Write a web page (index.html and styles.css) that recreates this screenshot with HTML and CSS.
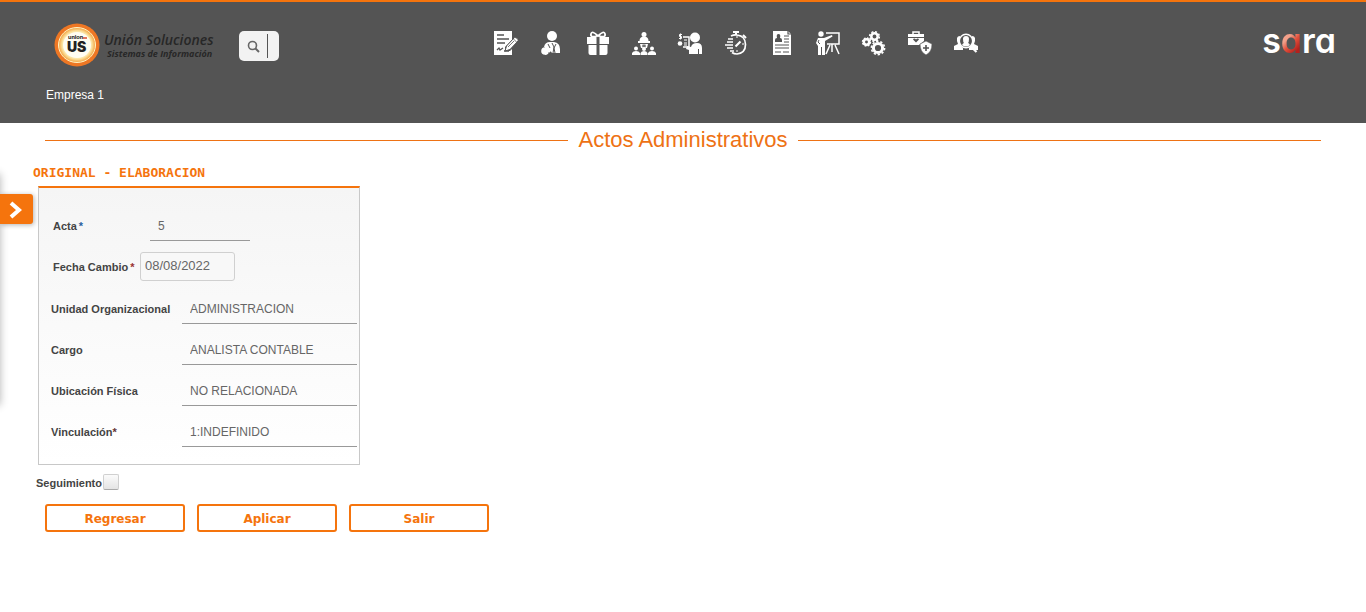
FILE: index.html
```html
<!DOCTYPE html>
<html lang="es">
<head>
<meta charset="utf-8">
<meta name="viewport" content="width=device-width, initial-scale=1">
<title>Actos Administrativos</title>
<link rel="stylesheet" href="styles.css">
</head>
<body>
<header class="header">
  <div class="topbar">
    <div class="brand">
      <a class="brand-link" href="#">
        <svg class="brand-mark" viewBox="0 0 46 44" aria-hidden="true">
          <defs>
            <radialGradient id="glow"><stop offset=".5" stop-color="#fffef0"/><stop offset=".8" stop-color="#fbe3a0"/><stop offset="1" stop-color="#f2a03d"/></radialGradient>
          </defs>
          <ellipse cx="23" cy="22" rx="22.500" ry="21.500" fill="#ee7724"/>
          <ellipse cx="23" cy="22" rx="18.500" ry="17.500" fill="url(#glow)" stroke="#fff3c4" stroke-width="1"/>
          <ellipse cx="23" cy="22" rx="14" ry="13" fill="#fffdf2"/>
          <text x="14" y="16" class="mark-small">union</text>
          <path d="M29 15h4" stroke="#d9482b" stroke-width="1.500"/>
          <text x="13" y="29" class="mark-big">US</text>
        </svg>
        <span class="brand-text">
          <span class="brand-name">Unión Soluciones</span>
          <span class="brand-sub">Sistemas de Información</span>
        </span>
      </a>
      <button class="search" type="button" aria-label="Buscar">
        <svg viewBox="0 0 14 14" width="14" height="14" fill="none" stroke="#666"><circle cx="5.500" cy="5.500" r="4" stroke-width="1.600"/><path d="M8.500 8.500l3.500 3.500" stroke-width="2"/></svg>
        <span class="search-line"></span>
      </button>
    </div>
    <nav class="modules" aria-label="Módulos">
      <a href="#" aria-label="Contratos"><svg viewBox="0 0 24 24">
        <path fill="#fff" d="M0 0h18v9l-7 7v4h5l2-2v6H0z"/><path d="M3 4h7M3 8h12M3 12h8M3 19l2-2 1 2 3-2M10 20h5" stroke="#545454" stroke-width="1.300" fill="none"/>
        <path d="M11 20l1.500-5 7.500-8c1-1.500 5 1 4 3l-8 8.500z" fill="#fff" stroke="#545454"/><path d="M14 16l6-6M19.500 8l3 3" stroke="#545454" stroke-width=".8"/></svg></a>
      <a href="#" aria-label="Empleados"><svg viewBox="0 0 24 24" fill="#fff">
        <circle cx="12" cy="5" r="5"/><path d="M4 16q1-5 6-5h4q6 1 6 7v4h-8l-3-4-3-2z"/><circle cx="5" cy="20" r="3.800"/><path d="M5 16l5-2 1 6-3 3-3 1z"/><path d="M8 13l2 4M12 12l2 4-1 6M16 13l-2 4 1 5M8 22l6 1" stroke="#545454" fill="none"/></svg></a>
      <a href="#" aria-label="Beneficios"><svg viewBox="0 0 24 24">
        <path fill="#fff" d="M1 6h9.500v7H1zM13.500 6H23v7h-9.500zM2.500 14h8v10h-6q-2 0-2-2zM13.500 14h8v8q0 2-2 2h-6z"/><path d="M11 5Q4 7 5 3t7 2q6-6 7-2t-6 2" fill="none" stroke="#fff" stroke-width="1.800"/></svg></a>
      <a href="#" aria-label="Comités"><svg viewBox="0 0 24 24" fill="#fff">
        <circle cx="12" cy="3.500" r="2.500"/><path d="M7.500 10q0-4.500 4.500-4.500t4.500 4.500zM6 10h12v2H6zM8 13h8l-1 4H9z"/><path d="M12 13v4M10 14l4 2M14 14l-4 2" stroke="#545454" stroke-width=".8"/><circle cx="4" cy="17.500" r="2"/><circle cx="20" cy="17.500" r="2"/><circle cx="12" cy="18" r="2"/><path d="M0 24v-2q1-2 4-2t4 2v2zM8.500 24v-2q1-2 3.500-2t3.500 2v2zM16 24v-2q1-2 4-2t4 2v2z"/></svg></a>
      <a href="#" aria-label="Nómina"><svg viewBox="0 0 24 24">
        <circle cx="17" cy="6.500" r="5" fill="#fff"/><path fill="#fff" d="M11 23v-4l-3-1 1-3 4 1q1-4 6-4 5 0 5 5v6h-3v-5h-1v5z"/><path d="M5 6h6v10H5" fill="none" stroke="#fff" stroke-width="1.500"/><path d="M6 9h3M6 12h3M6 14h3" stroke="#fff"/><path d="M4 3.500H1.500v2h2v2H1M2.500 2.500v6" fill="none" stroke="#fff"/><circle cx="2" cy="12.500" r="2.300" fill="#fff"/></svg></a>
      <a href="#" aria-label="Tiempos"><svg viewBox="0 0 24 24" fill="none" stroke="#fff">
        <path d="M7 5q3-1.500 6-1 8.500 1 8.500 9.500T13 23q-3 0-5-1.500" stroke-width="1.700"/><path d="M9 1h6M12 1v3M19 4l3 3" stroke-width="2"/><path d="M4 8h5M3 11h6M1 14h8M3 17h6M6 20h4" stroke-width="1.500"/><path d="M11.500 15.500l5-5" stroke-width="2.200"/><path d="M13 5v2M20 13h-2M13 21v-2" /></svg></a>
      <a href="#" aria-label="Hojas de vida"><svg viewBox="0 0 24 24">
        <path fill="#fff" d="M3 0h15l3 3v21H3z"/><path fill="#545454" d="M5 11V9q0-2 2-2-1-4 1.500-4T10 7q2 0 2 2v2z"/><path d="M14 5h5M14 8h5M14 11h5M5 14h14M5 17h14M5 21h6M13 21h6M18 0v3h3" fill="none" stroke="#545454" stroke-width="1.200"/></svg></a>
      <a href="#" aria-label="Capacitación"><svg viewBox="0 0 24 24">
        <circle cx="5" cy="3" r="2.700" fill="#fff"/><path fill="#fff" d="M2 7h6l8-3 .5 1.500L9 10v14H6v-8H5v8H2v-9l-2-3z"/><path d="M10 2h13v11H11M14 14l-4 9M19 14l4 9M16 13v8" fill="none" stroke="#fff" stroke-width="1.500"/><path d="M3 9l-1 2 2 2" stroke="#545454" fill="none"/></svg></a>
      <a href="#" aria-label="Configuración"><svg viewBox="0 0 24 24" fill="none" stroke="#fff">
        <g stroke-width="2.500"><circle cx="12.500" cy="5.500" r="3.200"/><circle cx="4.500" cy="11" r="2.700"/><circle cx="16" cy="17" r="4.600" stroke-width="3"/></g><g stroke-width="1.600"><circle cx="12.500" cy="5.500" r="4.800" stroke-dasharray="2 1.770"/><circle cx="4.500" cy="11" r="3.900" stroke-dasharray="1.700 1.360"/><circle cx="16" cy="17" r="6.600" stroke-dasharray="2.300 1.850"/></g></svg></a>
      <a href="#" aria-label="Salud ocupacional"><svg viewBox="0 0 24 24">
        <path fill="#fff" d="M0 3h16v3H0zM0 7h16v3l-5 4H0z"/><path d="M5 3V1h6v2" fill="none" stroke="#fff" stroke-width="1.500"/><path d="M8 11.500L5 8.500q1-2 3 0 2-2 3 0z" fill="#545454"/><path fill="#fff" stroke="#545454" stroke-width=".6" d="M12 13l6-3 6 3q0 8-6 11-6-3-6-11z"/><path d="M18 14v6M15 17h6" stroke="#545454" stroke-width="1.600"/></svg></a>
      <a href="#" aria-label="Selección"><svg viewBox="0 0 24 24">
        <path fill="#fff" d="M0 19v-4l4-2q-3-8 2-8v8l3 4v2zM24 19v-4l-4-2q3-8-2-8v8l-3 4v2z"/><circle cx="12" cy="10" r="6.700" fill="#545454" stroke="#fff" stroke-width="1.500"/><path d="M8 14q1-2 2-2-1-1-1-4 0-3 3-3t3 3q0 3-1 4 1 0 2 2-4 3-8 0z" fill="#fff"/><path d="M16.500 15l6 6" stroke="#fff" stroke-width="2.200"/></svg></a>
    </nav>
    <a class="sara" href="#" aria-label="Sara">s<span class="sara-accent">a</span>ra</a>
  </div>
  <div class="company">Empresa 1</div>
</header>

<aside class="drawer" aria-label="Menú lateral">
  <button class="drawer-toggle" type="button" aria-label="Abrir menú"><svg width="14" height="18" viewBox="0 0 14 18"><path d="M3 2l8 7-8 7" fill="none" stroke="#fff" stroke-width="4"/></svg></button>
</aside>

<main class="main">
  <h1 class="title">Actos Administrativos</h1>
  <form class="form">
    <h2 class="status">ORIGINAL - ELABORACION</h2>
    <div class="panel">
      <div class="row row-acta"><label for="acta">Acta<span class="mark mark-blue">*</span></label><input class="line" id="acta" value="5" readonly></div>
      <div class="row row-fecha"><label for="fecha">Fecha Cambio<span class="mark mark-red">*</span></label><input class="date" id="fecha" value="08/08/2022"></div>
      <div class="row"><label for="unidad">Unidad Organizacional</label><input class="line" id="unidad" value="ADMINISTRACION" readonly></div>
      <div class="row"><label for="cargo">Cargo</label><input class="line" id="cargo" value="ANALISTA CONTABLE" readonly></div>
      <div class="row"><label for="ubicacion">Ubicación Física</label><input class="line" id="ubicacion" value="NO RELACIONADA" readonly></div>
      <div class="row"><label for="vinculacion">Vinculación<span class="req">*</span></label><input class="line" id="vinculacion" value="1:INDEFINIDO" readonly></div>
    </div>
    <div class="follow"><label for="seguimiento">Seguimiento</label><input type="checkbox" id="seguimiento"></div>
    <div class="actions">
      <button type="button">Regresar</button>
      <button type="button">Aplicar</button>
      <button type="button">Salir</button>
    </div>
  </form>
</main>
</body>
</html>
```

FILE: styles.css
```css
* { box-sizing: border-box; }
body { margin: 0; background: #fff; color: #444; font-family: "Liberation Sans", Arial, sans-serif; position: relative; }
input, button { font-family: inherit; margin: 0; }

.header { background: #545454; border-top: 2px solid #f5740d; padding: 19px 30px 19px 54px; }
.topbar { display: grid; grid-template-columns: auto 3fr auto 4fr auto; align-items: center; height: 48px; }
.brand { grid-column: 1; display: flex; align-items: center; gap: 24px; }
.brand-link { display: flex; align-items: center; gap: 4px; color: #272727; text-decoration: none; }
.brand-mark { width: 46px; height: 44px; }
.mark-small { font: 900 6px Lato, sans-serif; fill: #222; }
.mark-big { font: 900 14px Inter, sans-serif; fill: #222; }
.brand-text { display: flex; flex-direction: column; width: 111px; padding-top: 1px; white-space: nowrap; font-family: "Open Sans", sans-serif; font-weight: 600; font-style: italic; }
.brand-name { font-size: 14px; line-height: 16px; }
.brand-sub { font-size: 9px; line-height: 12px; padding-left: 3px; font-weight: 700; }
.search { display: flex; align-items: center; gap: 6px; width: 40px; height: 30px; margin-top: 2px; padding: 0 8px; background: #f2f2f2; border: 0; border-radius: 5px; }
.search svg { flex: none; margin-top: 2px; }
.search-line { width: 1px; height: 24px; background: #555; }
.modules { grid-column: 3; display: flex; padding-bottom: 4px; }
.modules a { width: 46px; height: 24px; display: flex; justify-content: center; }
.modules svg { width: 24px; height: 24px; overflow: visible; }
.sara { grid-column: 5; color: #fff; text-decoration: none; font: 600 34px/40px Inter, sans-serif; font-feature-settings: "cv11"; padding-bottom: 8px; }
.sara-accent { color: transparent; background: linear-gradient(135deg, #f3a08a 40%, #e3503c 55%, #b3201c 75%); background-clip: text; -webkit-background-clip: text; }
.company { margin: 17px 0 0 -8px; color: #fff; font-size: 12px; line-height: 18px; }

.drawer { position: absolute; top: 174px; left: -20px; width: 20px; height: 231px; box-shadow: 0 0 8px rgba(0, 0, 0, .3); }
.drawer-toggle { position: absolute; top: 20px; left: 20px; width: 33px; height: 30px; padding: 2px 0 0 8px; display: flex; align-items: center; background: #f5740d; border: 0; border-radius: 0 3px 3px 0; box-shadow: 1px 1px 5px rgba(0, 0, 0, .3); }

.title { display: flex; align-items: center; gap: 10px; margin: 0; padding: 0 45px; color: #ee7214; font-size: 22px; font-weight: 400; line-height: 34px; }
.title::before, .title::after { content: ""; flex: 1; height: 1px; background: #ee7214; }
.form { padding: 7px 33px 24px; }
.status { margin: 0; color: #f5740d; font: 700 13px/18px "DejaVu Sans Mono", Consolas, monospace; }
.panel { width: 322px; margin: 4px 0 0 5px; padding: 12px 2px 17px 12px; border: 1px solid #c8c8c8; border-top: 2px solid #f5740d; background: linear-gradient(#f5f5f5, #fff); }
.row { display: grid; grid-template-columns: 131px 1fr; align-items: end; height: 41px; }
.row label, .follow label { font-size: 11px; font-weight: 700; line-height: 13px; }
.row label { padding-bottom: 8px; white-space: nowrap; }
.row-acta, .row-fecha { padding-left: 2px; }
.row-acta { grid-template-columns: 97px 100px; }
.row-fecha { grid-template-columns: 87px 95px; height: 42px; }
.row-fecha label { padding-bottom: 9px; }
.mark { padding-left: 2px; }
.mark-blue { color: #2a62a0; }
.mark-red { color: #993333; }
.req { color: #663333; }
.line { width: 100%; height: 29px; padding: 0 8px; border: 0; border-bottom: 1px solid #999; background: transparent; color: #666; font-size: 12px; }
.date { width: 100%; height: 29px; margin-bottom: 2px; padding: 0 4px 2px; border: 1px solid #d0d0d0; border-radius: 3px; background: #f8f8f8; color: #666; font-size: 13px; }
.follow { display: flex; align-items: center; gap: 1px; margin: 8px 0 0 3px; }
.follow label { padding-top: 4px; }
.follow input { appearance: none; width: 16px; height: 16px; border: 1px solid #d0d0d0; border-bottom-color: #aaa; border-radius: 2px; background: linear-gradient(#fbfbfb, #e4e4e4); }
.follow input:checked { background: #f5740d; }
.actions { display: flex; flex-wrap: wrap; gap: 12px; padding: 14px 0 0 12px; }
.actions button { width: 140px; height: 28px; padding: 1px 0 0; border: 2px solid #f5740d; border-radius: 3px; background: #fff; color: #f5740d; font: 700 12px "DejaVu Sans", Verdana, sans-serif; }
```
